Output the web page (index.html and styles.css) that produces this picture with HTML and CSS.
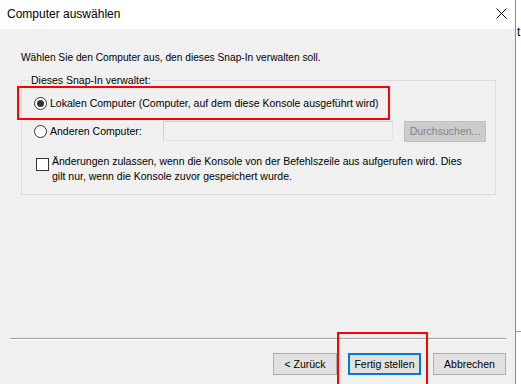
FILE: index.html
```html
<!DOCTYPE html>
<html>
<head>
    <title>Computer auswählen</title>
    <link rel="stylesheet" href="styles.css">
</head>
<body>
    <div class="screen">
        <div class="dialog">
            <div class="titlebar">
                <span class="title">Computer auswählen</span>
                <svg class="close" width="11" height="11" viewBox="0 0 11 11">
                    <path d="M0.5 0.5 L10.5 10.5 M10.5 0.5 L0.5 10.5" stroke="#000" stroke-width="1" fill="none"/>
                </svg>
            </div>

            <div class="dialog-body">
                <div class="content">
                    <p class="intro">Wählen Sie den Computer aus, den dieses Snap-In verwalten soll.</p>

                    <fieldset class="group">
                        <legend>Dieses Snap-In verwaltet:</legend>

                        <div class="row row-local">
                            <span class="radio checked"></span>
                            <span class="label">Lokalen Computer (Computer, auf dem diese Konsole ausgeführt wird)</span>
                        </div>

                        <div class="row row-other">
                            <div class="radio-item">
                                <span class="radio"></span>
                                <span class="label">Anderen Computer:</span>
                            </div>
                            <div class="textbox"></div>
                            <button class="btn btn-disabled">Durchsuchen...</button>
                        </div>

                        <div class="row row-check">
                            <span class="checkbox"></span>
                            <span class="label">Änderungen zulassen, wenn die Konsole von der Befehlszeile aus aufgerufen wird. Dies<br>gilt nur, wenn die Konsole zuvor gespeichert wurde.</span>
                        </div>
                    </fieldset>
                </div>

                <div class="footer">
                    <div class="separator"></div>
                    <div class="buttons">
                        <button class="btn btn-back">&lt; Zurück</button>
                        <button class="btn btn-default">Fertig stellen</button>
                        <button class="btn">Abbrechen</button>
                    </div>
                </div>
            </div>

            <!-- annotation boxes drawn over the dialog -->
            <div class="mark mark-local"></div>
            <div class="mark mark-finish"></div>
        </div>

        <div class="behind">
            <span class="behind-text">t</span>
            <div class="behind-line"></div>
        </div>
    </div>
</body>
</html>
```

FILE: styles.css
```css
html, body {
    margin: 0;
    padding: 0;
    height: 100%;
    overflow: hidden;
}

body {
    font-family: "Liberation Sans", Arial, sans-serif;
    font-size: 10.5px;
    color: #000;
    background: #fff;
}

.screen {
    display: flex;
    height: 384px;
}

.dialog {
    position: relative;
    width: 515px;
    flex: none;
    display: flex;
    flex-direction: column;
    border-right: 1px solid #8a8a8a;
}

.titlebar {
    height: 29px;
    background: #fff;
    display: flex;
    align-items: center;
    justify-content: space-between;
    padding: 0 8px 1px 7px;
    box-sizing: border-box;
}

.title {
    font-size: 12px;
    line-height: 15px;
}

.close {
    margin-top: -1px;
}

.dialog-body {
    flex: 1;
    background: #f0f0f0;
    display: flex;
    flex-direction: column;
}

.content {
    flex: 1;
    padding: 21px 19px 0 21px;
}

.intro {
    margin: 0;
    font-size: 10.2px;
    line-height: 15px;
}

.group {
    margin: 8px 0 0 0;
    padding: 0 0 10px 12px;
    border: 1px solid #dcdcdc;
    min-width: 0;
}

.group legend {
    margin-left: -4px;
    padding: 0 1px;
    line-height: 15px;
}

.row {
    display: flex;
    align-items: center;
    line-height: 15px;
}

.row-local {
    height: 20px;
    margin-top: 5px;
}

.row-other {
    height: 20px;
    margin-top: 8px;
}

.row-check {
    align-items: flex-start;
    margin-top: 13px;
}

.radio {
    width: 13px;
    height: 13px;
    box-sizing: border-box;
    border: 1px solid #333;
    border-radius: 50%;
    background: #fff;
    display: flex;
    align-items: center;
    justify-content: center;
    flex: none;
    margin-right: 3px;
}

.radio.checked::after {
    content: '';
    width: 7px;
    height: 7px;
    border-radius: 50%;
    background: #333;
}

.radio-item {
    width: 129px;
    display: flex;
    align-items: center;
}

.textbox {
    width: 230px;
    height: 20px;
    box-sizing: border-box;
    border: 1px solid #cfcfcf;
    border-right-color: #e3e3e3;
    border-bottom-color: #e3e3e3;
    background: #f0f0f0;
}

.checkbox {
    width: 13px;
    height: 13px;
    box-sizing: border-box;
    border: 1px solid #333;
    background: #fff;
    flex: none;
    margin: 4px 3px 0 2px;
}

.btn {
    font-family: "Liberation Sans", Arial, sans-serif;
    font-size: 10.5px;
    height: 22px;
    width: 73px;
    padding: 0;
    margin: 0;
    border: 1px solid #adadad;
    background: #e1e1e1;
    color: #000;
    box-sizing: border-box;
}

.btn-disabled {
    width: 82px;
    height: 21px;
    margin-left: 11px;
    border-color: #bfbfbf;
    background: #cccccc;
    color: #838383;
}

.footer {
    padding: 0 9px 9px 10px;
}

.separator {
    height: 1px;
    background: #a0a0a0;
    border-bottom: 1px solid #fff;
}

.buttons {
    display: flex;
    justify-content: flex-end;
    gap: 11px;
    margin-top: 13px;
}

.btn-back {
    width: 64px;
}

.btn-default {
    border: 2px solid #0078d7;
    margin-right: 1px;
}

.mark {
    position: absolute;
    border: 2px solid #f00;
    box-sizing: border-box;
}

.mark-local {
    left: 17px;
    top: 86px;
    width: 373px;
    height: 34px;
}

.mark-finish {
    left: 337px;
    top: 332px;
    width: 91px;
    height: 70px;
}

.behind {
    flex: 1;
    position: relative;
    background: #fff;
}

.behind-text {
    display: block;
    margin: 25px 0 0 1px;
    font-size: 12px;
    line-height: 15px;
}

.behind-line {
    height: 1px;
    background: #999;
    margin-top: 291px;
}
```
